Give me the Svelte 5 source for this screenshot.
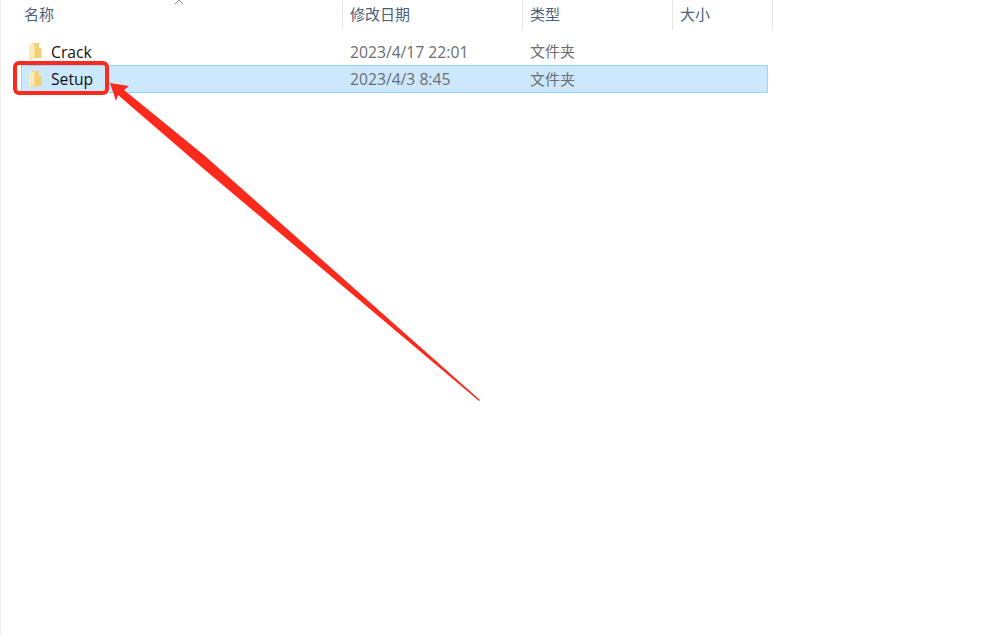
<script>
	const columns = [
		{ label: "名称", width: 342 },
		{ label: "修改日期", width: 180 },
		{ label: "类型", width: 150 },
		{ label: "大小", width: 100 },
	];

	const rows = [
		{ name: "Crack", date: "2023/4/17 22:01", type: "文件夹", selected: false },
		{ name: "Setup", date: "2023/4/3 8:45", type: "文件夹", selected: true },
	];
</script>

<div class="window">
	<svg class="sort" width="12" height="6" viewBox="0 0 12 6">
		<path d="M2 4 L6 0 L10 4" fill="none" stroke="#8a8a8a" stroke-width="1" />
	</svg>

	<div class="header">
		{#each columns as col}
			<div class="col" style="width: {col.width}px">{col.label}</div>
		{/each}
	</div>

	<div class="list">
		{#each rows as row}
			<div class="row" class:selected={row.selected}>
				<div class="name">
					<svg class="folder" width="13" height="17" viewBox="0 0 13 17">
						<path d="M3 0 H10 V5 H12.5 V15 H3 Z" fill="#f3cf74" />
						<path d="M0 2 L6 0 V14 L0.5 17 L0 16.5 Z" fill="#fcebb4" />
						<path d="M6 0 V14 L0.5 17" fill="none" stroke="#e9c870" stroke-width="0.6" />
					</svg>
					<span>{row.name}</span>
				</div>
				<div class="date">{row.date}</div>
				<div class="type">{row.type}</div>
			</div>
		{/each}
	</div>

	<div class="callout"></div>

	<svg class="arrow" width="987" height="635" viewBox="0 0 987 635">
		<path d="M110 83 L129 86 L124 90 L205 156 L480 400 L479 401 L205 170 L118 95 L116 101 Z" fill="#fb2a1c" />
	</svg>
</div>

<style>
	:global(body) {
		margin: 0;
		background: #fff;
	}

	.window {
		position: relative;
		width: 987px;
		height: 635px;
		overflow: hidden;
		background: #fff;
		font-family: "Open Sans", "Noto Sans CJK SC", sans-serif;
		font-size: 15px;
		border-left: 1px solid #efefef;
		box-sizing: border-box;
	}

	.sort {
		position: absolute;
		left: 172px;
		top: 0;
	}

	.header {
		display: flex;
		height: 30px;
	}

	.col {
		box-sizing: border-box;
		padding: 4px 0 0 23px;
		color: #4c607a;
		border-right: 1px solid #e5e5e5;
		line-height: 20px;
	}

	.col:not(:first-child) {
		padding-left: 7px;
	}

	.list {
		margin-top: 8px;
		padding-left: 20px;
	}

	.row {
		display: flex;
		align-items: center;
		width: 747px;
		height: 27px;
		box-sizing: border-box;
		border: 1px solid transparent;
	}

	.row.selected {
		height: 28px;
		background: #cce8ff;
		border-color: #99d1ff;
	}

	.name {
		display: flex;
		align-items: center;
		width: 328px;
		padding-left: 7px;
		box-sizing: border-box;
		color: #111;
		font-size: 15.7px;
	}

	.folder {
		margin-right: 9px;
	}

	.date {
		width: 180px;
		color: #6d6d6d;
		font-size: 15.7px;
	}

	.type {
		color: #6d6d6d;
		margin-bottom: 2px;
	}

	.callout {
		position: absolute;
		left: 12px;
		top: 61px;
		width: 96px;
		height: 34px;
		box-sizing: border-box;
		border: 4px solid #fb2a1c;
		border-radius: 6px;
	}

	.arrow {
		position: absolute;
		left: -1px;
		top: 0;
		pointer-events: none;
	}
</style>
